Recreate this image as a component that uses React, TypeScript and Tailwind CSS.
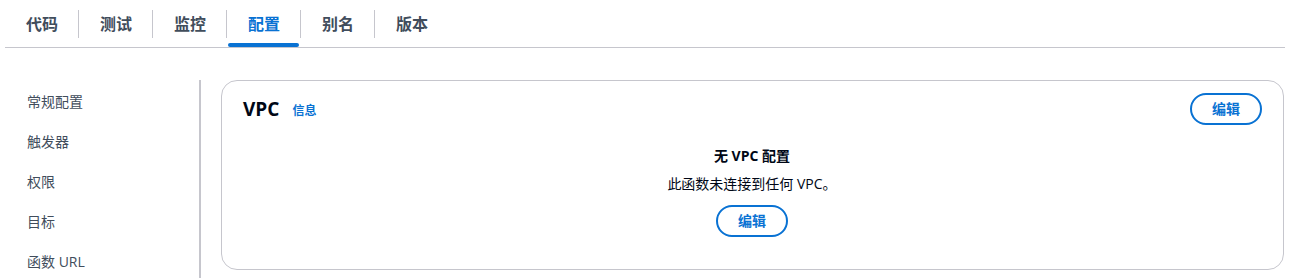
import React from 'react'

const TABS = ['代码', '测试', '监控', '配置', '别名', '版本']
const NAV = ['常规配置', '触发器', '权限', '目标', '函数 URL']

const EditButton: React.FC = () => (
  <button className="h-8 px-5 rounded-full border-2 border-[#0972d3] text-[#0972d3] text-[14px] font-bold leading-none flex items-center">
    编辑
  </button>
)

export default function App() {
  const active = '配置'

  return (
    <div
      className="bg-white text-[#000716] min-h-screen"
      style={{ fontFamily: '"Open Sans", "Noto Sans CJK SC", sans-serif' }}
    >
      <div className="mx-[5px] w-[1280px]">
        {/* Tabs */}
        <div className="flex h-[48px] border-b border-[#c6c6cd]">
          {TABS.map((tab, i) => (
            <React.Fragment key={tab}>
              {i > 0 && <div className="w-px h-[28px] mt-[10px] bg-[#c6c6cd]" />}
              <button
                className={`relative h-full pl-[21px] pr-5 flex items-center text-[16px] font-bold ${
                  tab === active ? 'text-[#0972d3]' : 'text-[#414d5c]'
                }`}
              >
                {tab}
                {tab === active && (
                  <span className="absolute left-px right-px bottom-0 h-[4px] rounded-full bg-[#0972d3]" />
                )}
              </button>
            </React.Fragment>
          ))}
        </div>

        {/* Body */}
        <div className="flex mt-8">
          <div className="w-[196px] shrink-0 border-r-2 border-[#c6c6cd] pt-px">
            {NAV.map((item) => (
              <div key={item} className="h-10 pl-[22px] flex items-center text-[14px] text-[#414d5c]">
                {item}
              </div>
            ))}
          </div>

          <div className="ml-5 mr-px flex-1 h-[190px] border border-[#c6c6cd] rounded-[16px] pl-5 pr-[21px] pt-3">
            <div className="flex items-center justify-between">
              <div className="flex items-center gap-[13px] pl-px">
                <h2 className="text-[19px] font-bold leading-none">VPC</h2>
                <a className="text-[12px] font-bold text-[#0972d3] mt-[3px]">信息</a>
              </div>
              <EditButton />
            </div>

            <div className="flex flex-col items-center mt-[21px]">
              <div className="text-[14px] font-bold leading-5">无 VPC 配置</div>
              <div className="text-[14px] leading-5 mt-2">此函数未连接到任何 VPC。</div>
              <div className="mt-[11px]">
                <EditButton />
              </div>
            </div>
          </div>
        </div>
      </div>
    </div>
  )
}
